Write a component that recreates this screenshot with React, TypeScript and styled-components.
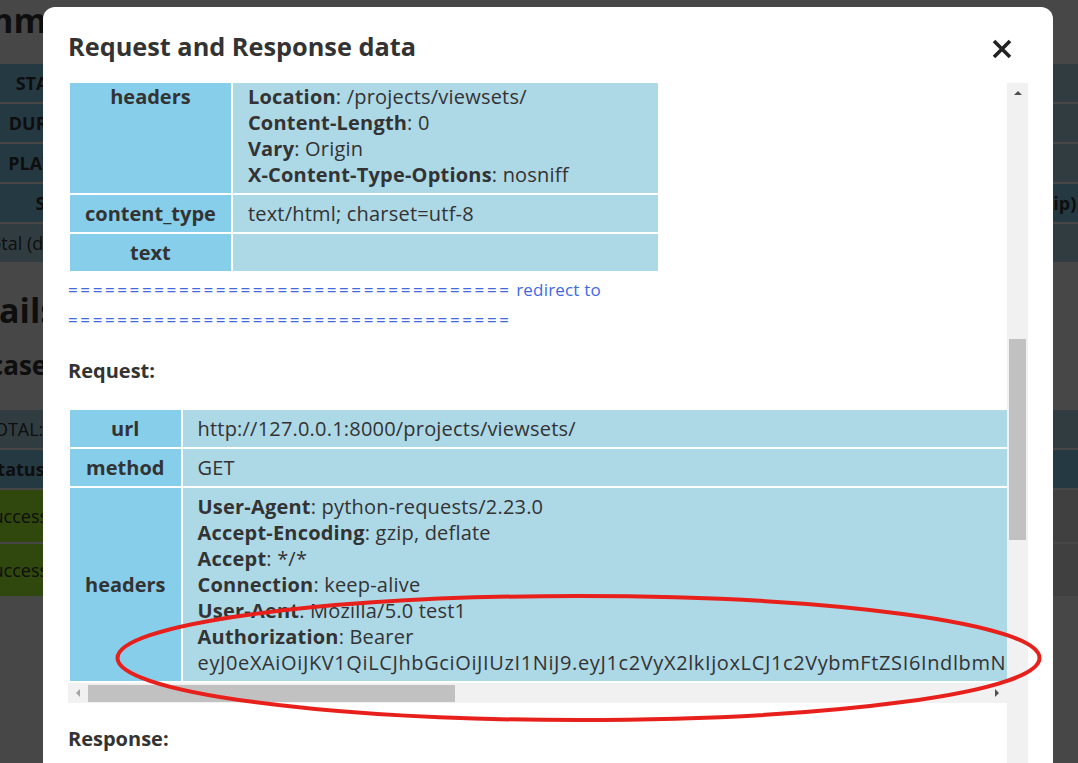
import React, { useLayoutEffect, useRef } from 'react';
import styled, { createGlobalStyle, css } from 'styled-components';

const GlobalStyle = createGlobalStyle`
  html, body {
    margin: 0;
    padding: 0;
    height: 100%;
    overflow: hidden;
    background: #fff;
  }
  body {
    font-family: "Open Sans", "Liberation Sans", sans-serif;
    color: #333;
  }
`;

type Pair = [string, React.ReactNode];
type Dir = 'up' | 'down' | 'left' | 'right';

const TOKEN =
  'eyJ0eXAiOiJKV1QiLCJhbGciOiJIUzI1NiJ9.eyJ1c2VyX2lkIjoxLCJ1c2VybmFtZSI6IndlbmNoYW8iLCJleHAiOjE1OTUwNDk1NjUsImVtYWlsIjoid2VuY2hhb0BxcS5jb20iLCJvcmlnX2lhdCI6MTU5NDk2MzE2NX0.3dQ2mTz0Vb1sYfL8pR4nHcW6aJqE9uKoG7iD5vBxMkU';

/* ---------- page behind the dialog ---------- */

const Page = styled.div`
  display: flex;
  justify-content: center;
`;

const PageInner = styled.div`
  flex: none;
  width: 1200px;
  font-size: 18px;
`;

const PageTitle = styled.h2<{ $top: number }>`
  margin: ${(p) => p.$top}px 0 0 0;
  font-size: 34px;
  line-height: 40px;
  font-weight: 700;
`;

const CaseTitle = styled.h3`
  margin: 20px 0 0 0;
  font-size: 26px;
  line-height: 30px;
`;

const ReportTable = styled.table<{ $top: number }>`
  width: 1124px;
  margin: ${(p) => p.$top}px 0 0 31px;
  border-spacing: 2px;
  font-size: 18px;
  line-height: 24px;
`;

const ReportTh = styled.th<{ $w?: number }>`
  background: #87ceeb;
  padding: 7px 12px;
  font-weight: 700;
  text-align: center;
  ${(p) => p.$w && `width: ${p.$w}px;`}
`;

const ReportTd = styled.td<{ $tone?: 'info' | 'success' | 'plain' }>`
  background: ${(p) =>
    p.$tone === 'success' ? '#adff2f' : p.$tone === 'plain' ? '#e5e5e5' : '#add8e6'};
  padding: 7px 12px;
  text-align: ${(p) => (p.$tone && p.$tone !== 'info' ? 'center' : 'left')};
  line-height: ${(p) => (p.$tone && p.$tone !== 'info' ? '38px' : '24px')};
`;

/* ---------- dialog ---------- */

const Overlay = styled.div`
  position: fixed;
  inset: 0;
  background: rgba(0, 0, 0, 0.72);
  overflow: hidden;
`;

const Modal = styled.div`
  margin: 7px 0 0 43px;
  width: 1010px;
  box-sizing: border-box;
  padding: 0 25px;
  background: #fff;
  border-radius: 12px;
`;

const ModalHeader = styled.div`
  height: 76px;
  box-sizing: border-box;
  padding-top: 2px;
  display: flex;
  align-items: center;
  justify-content: space-between;
`;

const ModalTitle = styled.h4`
  margin: 0;
  font-size: 25.3px;
  font-weight: 700;
  color: #333;
`;

const CloseButton = styled.button`
  border: 0;
  background: none;
  padding: 0;
  margin: 6px 16px 0 0;
  color: #222;
  cursor: pointer;

  svg {
    display: block;
  }
`;

const ScrollFrame = styled.div`
  display: flex;
  height: 720px;
`;

const BodyViewport = styled.div`
  flex: 1;
  min-width: 0;
  overflow: hidden;
`;

const arrow = (dir: Dir, c: string) => {
  switch (dir) {
    case 'up':
      return css`border-left: 4px solid transparent; border-right: 4px solid transparent; border-bottom: 4px solid ${c};`;
    case 'down':
      return css`border-left: 4px solid transparent; border-right: 4px solid transparent; border-top: 4px solid ${c};`;
    case 'left':
      return css`border-top: 4px solid transparent; border-bottom: 4px solid transparent; border-right: 4px solid ${c};`;
    default:
      return css`border-top: 4px solid transparent; border-bottom: 4px solid transparent; border-left: 4px solid ${c};`;
  }
};

const Scrollbar = styled.div<{ $vertical?: boolean }>`
  flex: none;
  display: flex;
  flex-direction: ${(p) => (p.$vertical ? 'column' : 'row')};
  ${(p) => (p.$vertical ? 'width: 21px;' : 'height: 20px;')}
  background: #f1f1f1;
`;

const ScrollButton = styled.div<{ $dir: Dir; $muted?: boolean }>`
  flex: 0 0 20px;
  display: flex;
  align-items: center;
  justify-content: center;

  &::before {
    content: '';
    width: 0;
    height: 0;
    ${(p) => arrow(p.$dir, p.$muted ? '#a3a3a3' : '#505050')}
  }
`;

const Track = styled.div<{ $vertical?: boolean }>`
  flex: 1;
  display: flex;
  flex-direction: ${(p) => (p.$vertical ? 'column' : 'row')};
  padding: ${(p) => (p.$vertical ? '0 2px' : '2px 0 1px')};
`;

const Thumb = styled.div<{ $vertical?: boolean; $offset: number; $size: number }>`
  flex: none;
  background: #c1c1c1;
  ${(p) =>
    p.$vertical
      ? `margin-top: ${p.$offset}px; height: ${p.$size}px;`
      : `margin-left: ${p.$offset}px; width: ${p.$size}px;`}
`;

const SectionTitle = styled.h5`
  margin: 23px 0 24px;
  font-size: 20px;
  line-height: 26px;
  font-weight: 700;
  color: #333;
`;

const TableClip = styled.div`
  overflow: hidden;
`;

const DataTable = styled.table<{ $width?: number }>`
  border-spacing: 2px;
  font-family: "Open Sans", "Liberation Sans", sans-serif;
  font-size: 20px;
  line-height: 26px;
  color: #333;
  ${(p) => p.$width && `width: ${p.$width}px;`}
`;

const LabelCell = styled.th`
  width: 1%;
  background: #87ceeb;
  padding: 6px 15px 5px;
  font-weight: 700;
  text-align: center;
  vertical-align: middle;
  white-space: nowrap;
`;

const ValueCell = styled.td`
  background: #add8e6;
  padding: 6px 15px 5px;
  text-align: left;
  vertical-align: top;
  letter-spacing: 0.2px;
`;

const Line = styled.div<{ $pre?: boolean }>`
  white-space: ${(p) => (p.$pre ? 'pre' : 'normal')};
`;

const Key = styled.strong`
  font-weight: 700;
`;

const Token = styled.span`
  letter-spacing: 0.62px;
`;

const RedirectNote = styled.div`
  margin-top: 2px;
  font-size: 17px;
  line-height: 30px;
  letter-spacing: 0.2px;
  color: #4169e1;
`;

const Rule = styled.span`
  letter-spacing: 2.6px;
`;

const Annotation = styled.svg`
  position: fixed;
  left: 0;
  top: 0;
  pointer-events: none;
`;

const requestHeaders: Pair[] = [
  ['User-Agent', 'python-requests/2.23.0'],
  ['Accept-Encoding', 'gzip, deflate'],
  ['Accept', '*/*'],
  ['Connection', 'keep-alive'],
  ['User-Aent', 'Mozilla/5.0 test1'],
  [
    'Authorization',
    <>
      Bearer <Token>{TOKEN}</Token>
    </>,
  ],
];

const redirectHeaders: Pair[] = [
  ['Date', 'Fri, 17 Jul 2020 06:12:45 GMT'],
  ['Server', 'WSGIServer/0.2 CPython/3.7.4'],
  ['Content-Type', 'text/html; charset=utf-8'],
  ['Location', '/projects/viewsets/'],
  ['Content-Length', '0'],
  ['Vary', 'Origin'],
  ['X-Content-Type-Options', 'nosniff'],
];

const finalHeaders: Pair[] = [
  ['Date', 'Fri, 17 Jul 2020 06:12:45 GMT'],
  ['Server', 'WSGIServer/0.2 CPython/3.7.4'],
  ['Content-Type', 'application/json'],
  ['Vary', 'Accept, Origin'],
  ['Allow', 'GET, POST, HEAD, OPTIONS'],
  ['X-Frame-Options', 'DENY'],
  ['Content-Length', '312'],
  ['X-Content-Type-Options', 'nosniff'],
  ['Referrer-Policy', 'same-origin'],
];

const jsonLines = [
  '[',
  '  {"id": 1, "name": "project_01", "leader": "wenchao"},',
  '  {"id": 2, "name": "project_02", "leader": "wenchao"},',
  '  {"id": 3, "name": "project_03", "leader": "lemon"},',
  '  {"id": 4, "name": "project_04", "leader": "lemon"},',
  ']',
];

function Row({ label, children }: { label: string; children?: React.ReactNode }) {
  return (
    <tr>
      <LabelCell>{label}</LabelCell>
      <ValueCell>{children}</ValueCell>
    </tr>
  );
}

function Headers({ items }: { items: Pair[] }) {
  return (
    <>
      {items.map(([k, v]) => (
        <Line key={k}>
          <Key>{k}</Key>: {v}
        </Line>
      ))}
    </>
  );
}

function HScrollbar({ offset, size }: { offset: number; size: number }) {
  return (
    <Scrollbar>
      <ScrollButton $dir="left" $muted />
      <Track>
        <Thumb $offset={offset} $size={size} />
      </Track>
      <ScrollButton $dir="right" />
    </Scrollbar>
  );
}

function RequestTable({ url }: { url: string }) {
  return (
    <>
      <TableClip>
        <DataTable>
          <tbody>
            <Row label="url">{url}</Row>
            <Row label="method">GET</Row>
            <Row label="headers">
              <Headers items={requestHeaders} />
            </Row>
          </tbody>
        </DataTable>
      </TableClip>
      <HScrollbar offset={0} size={367} />
    </>
  );
}

const RULE = '='.repeat(36);

export default function App() {
  const bodyRef = useRef<HTMLDivElement>(null);
  const anchorRef = useRef<HTMLHeadingElement>(null);

  useLayoutEffect(() => {
    const body = bodyRef.current;
    const anchor = anchorRef.current;
    if (!body || !anchor) return;
    const top =
      anchor.getBoundingClientRect().top - body.getBoundingClientRect().top + body.scrollTop;
    body.scrollTop = top - 275;
  }, []);

  return (
    <>
      <GlobalStyle />
      <Page>
        <PageInner>
          <PageTitle $top={0}>Summary</PageTitle>
          <ReportTable $top={22}>
            <tbody>
              <tr>
                <ReportTh $w={146}>START AT</ReportTh>
                <ReportTd colSpan={2}>2020-07-17 14:12:45.083514</ReportTd>
              </tr>
              <tr>
                <ReportTh>DURATION</ReportTh>
                <ReportTd colSpan={2}>0.062 seconds</ReportTd>
              </tr>
              <tr>
                <ReportTh>PLATFORM</ReportTh>
                <ReportTd colSpan={2}>HttpRunner 2.5.7 CPython 3.7.4 Windows-10-10.0.18362-SP0</ReportTd>
              </tr>
              <tr>
                <ReportTh>STAT</ReportTh>
                <ReportTh>TESTCASES (success/fail)</ReportTh>
                <ReportTh $w={319}>TESTSTEPS (success/fail/error/skip)</ReportTh>
              </tr>
              <tr>
                <ReportTd>total (details) =&gt;</ReportTd>
                <ReportTd>1 (1/0)</ReportTd>
                <ReportTd>2 (2/0/0/0)</ReportTd>
              </tr>
            </tbody>
          </ReportTable>
          <PageTitle $top={26}>Details</PageTitle>
          <CaseTitle>testcase: projects viewsets</CaseTitle>
          <ReportTable $top={28}>
            <tbody>
              <tr>
                <ReportTd colSpan={4}>TOTAL: 2 SUCCESS: 2 FAILED: 0 ERROR: 0 SKIPPED: 0</ReportTd>
              </tr>
              <tr>
                <ReportTh $w={60}>Status</ReportTh>
                <ReportTh>Name</ReportTh>
                <ReportTh>Response Time</ReportTh>
                <ReportTh>Detail</ReportTh>
              </tr>
              <tr>
                <ReportTd $tone="success">success</ReportTd>
                <ReportTd $tone="success">get projects</ReportTd>
                <ReportTd $tone="success">12.4 ms</ReportTd>
                <ReportTd $tone="plain">log-http</ReportTd>
              </tr>
              <tr>
                <ReportTd $tone="success">success</ReportTd>
                <ReportTd $tone="success">get projects viewsets</ReportTd>
                <ReportTd $tone="success">15.1 ms</ReportTd>
                <ReportTd $tone="plain">log-http</ReportTd>
              </tr>
            </tbody>
          </ReportTable>
        </PageInner>
      </Page>

      <Overlay>
        <Modal>
          <ModalHeader>
            <ModalTitle>Request and Response data</ModalTitle>
            <CloseButton aria-label="Close">
              <svg width="20" height="20" viewBox="0 0 20 20">
                <path d="M2 2 L18 18 M18 2 L2 18" stroke="currentColor" strokeWidth="3.6" fill="none" />
              </svg>
            </CloseButton>
          </ModalHeader>
          <ScrollFrame>
            <BodyViewport ref={bodyRef}>
              <SectionTitle>Request:</SectionTitle>
              <RequestTable url="http://127.0.0.1:8000/projects/viewsets" />
              <SectionTitle>Response:</SectionTitle>
              <DataTable $width={592}>
                <tbody>
                  <Row label="ok">True</Row>
                  <Row label="url">http://127.0.0.1:8000/projects/viewsets</Row>
                  <Row label="status_code">301</Row>
                  <Row label="reason">Moved Permanently</Row>
                  <Row label="encoding">utf-8</Row>
                  <Row label="cookies">{'{}'}</Row>
                  <Row label="elapsed">0:00:00.009814</Row>
                  <Row label="headers">
                    <Headers items={redirectHeaders} />
                  </Row>
                  <Row label="content_type">text/html; charset=utf-8</Row>
                  <Row label="text" />
                </tbody>
              </DataTable>
              <RedirectNote>
                <Rule>{RULE}</Rule> redirect to <Rule>{RULE}</Rule>
              </RedirectNote>
              <SectionTitle ref={anchorRef}>Request:</SectionTitle>
              <RequestTable url="http://127.0.0.1:8000/projects/viewsets/" />
              <SectionTitle>Response:</SectionTitle>
              <DataTable>
                <tbody>
                  <Row label="ok">True</Row>
                  <Row label="url">http://127.0.0.1:8000/projects/viewsets/</Row>
                  <Row label="status_code">200</Row>
                  <Row label="reason">OK</Row>
                  <Row label="headers">
                    <Headers items={finalHeaders} />
                  </Row>
                  <Row label="content_type">application/json</Row>
                  <Row label="json">
                    {jsonLines.map((l, i) => (
                      <Line key={i} $pre>
                        {l}
                      </Line>
                    ))}
                  </Row>
                </tbody>
              </DataTable>
            </BodyViewport>
            <Scrollbar $vertical>
              <ScrollButton $dir="up" />
              <Track $vertical>
                <Thumb $vertical $offset={236} $size={201} />
              </Track>
              <ScrollButton $dir="down" />
            </Scrollbar>
          </ScrollFrame>
        </Modal>
      </Overlay>

      <Annotation width={1078} height={763} viewBox="0 0 1078 763">
        <ellipse cx="578.5" cy="658" rx="461" ry="62" fill="none" stroke="#e8201c" strokeWidth="4" />
      </Annotation>
    </>
  );
}
